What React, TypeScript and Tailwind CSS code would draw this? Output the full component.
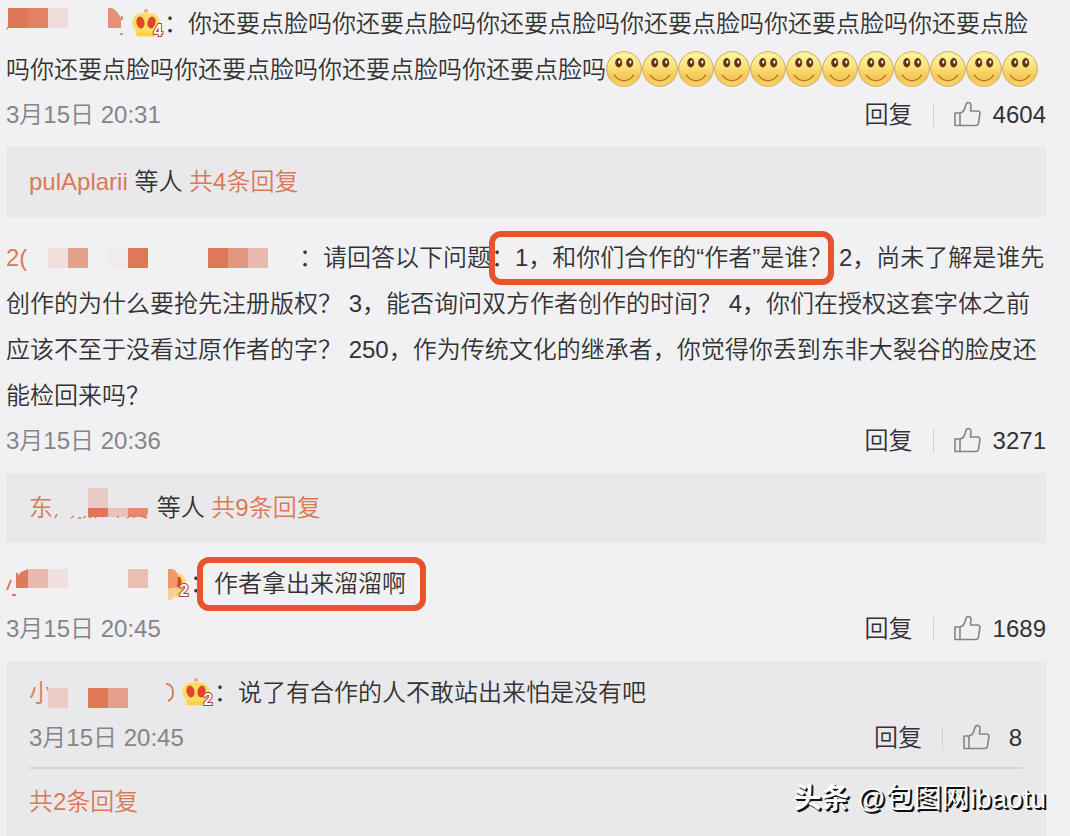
import { useId, type ReactNode } from 'react';

interface Tile {
  x: number;
  y: number;
  fill: string;
  h?: number;
}

const SMILES = Array.from({ length: 12 }, (_, i) => i);

// Pixelated blocks that hide part of a user name
function Mosaic({ className, tiles, children }: { className: string; tiles: Tile[]; children?: ReactNode }) {
  return (
    <svg className={`inline-block h-[46px] align-top ${className}`} aria-hidden="true">
      {tiles.map((t) => (
        <rect key={`${t.x}-${t.y}`} x={t.x} y={t.y} width="20" height={t.h ?? 20} fill={t.fill} />
      ))}
      {children}
    </svg>
  );
}

function Crown({ level, covered }: { level: number; covered?: boolean }) {
  const clip = useId();
  return (
    <svg className="inline-block h-[46px] w-8 align-top" viewBox="0 0 32 46" role="img" aria-label={`VIP ${level}`}>
      <clipPath id={clip}>
        <rect x={covered ? 10 : 0} y="0" width="32" height="46" />
      </clipPath>
      <g clipPath={`url(#${clip})`}>
        <circle cx="14" cy="10" r="2" fill="#e9a878" />
        <path
          d="M4 35.500V29.500C1 27 0 24 0.500 20.500C1 15.500 5 12.500 9.500 12.500C11.500 12.500 13 12 14 11C15 12 16.500 12.500 18.500 12.500C23 12.500 27 15.500 27.500 20.500C28 24 27 27 24 29.500V35.500Z"
          fill="#fbdc62"
          stroke="#f9e3a0"
        />
        <path d="M5 30.500C10 32 18 32 23 30.500V35H5Z" fill="#f8d04c" />
        <ellipse cx="8.500" cy="21.500" rx="4" ry="6" fill="#e0442c" transform="rotate(-12 8.500 21.500)" />
        <ellipse cx="19.500" cy="21.500" rx="4" ry="6" fill="#e0442c" transform="rotate(12 19.500 21.500)" />
      </g>
      {covered && (
        <>
          <path d="M10 8H14C18 9 20 12 20 16L19 26L10 28Z" fill="#f09a68" />
          <path d="M10 28L21 26C20 34 16 38 10 40Z" fill="#f4cf98" />
        </>
      )}
      <text
        x="26"
        y="35"
        textAnchor="middle"
        fontSize="16"
        fontWeight="700"
        fill="#fff"
        stroke="#a8432f"
        strokeWidth="2"
        paintOrder="stroke"
        fontFamily="Liberation Sans, sans-serif"
      >
        {level}
      </text>
    </svg>
  );
}

function Smile() {
  const fill = useId();
  return (
    <svg className="inline-block h-[46px] w-9 align-top" viewBox="0 -4 36 46" role="img" aria-label="微笑">
      <defs>
        <linearGradient id={fill} x1="0" y1="0" x2="0" y2="1">
          <stop offset="0" stopColor="#fff6a4" />
          <stop offset="0.45" stopColor="#fbe07a" />
          <stop offset="0.75" stopColor="#f4c653" />
          <stop offset="1" stopColor="#f9d86a" />
        </linearGradient>
      </defs>
      <circle cx="18" cy="18" r="17.300" fill={`url(#${fill})`} stroke="#cfa95a" />
      <ellipse cx="12.700" cy="11.800" rx="3.500" ry="4.700" fill="#5f3310" />
      <ellipse cx="23.700" cy="11.800" rx="3.500" ry="4.700" fill="#5f3310" />
      <ellipse cx="13.300" cy="11" rx="1.100" ry="1.700" fill="#fff" />
      <ellipse cx="24.300" cy="11" rx="1.100" ry="1.700" fill="#fff" />
      <path d="M8.500 24C13 31.500 23 31.500 27.500 24" fill="none" stroke="#b5702a" strokeWidth="1.300" strokeLinecap="round" />
    </svg>
  );
}

function ThumbIcon() {
  return (
    <svg className="h-7 w-7 shrink-0" viewBox="0 0 28 28" fill="none" stroke="#858587" strokeWidth="1.600" strokeLinejoin="round" aria-hidden="true">
      <path d="M1 12H6V24.500H1Z" />
      <path d="M6 12C9 11.500 10.800 8.500 11.500 5C12 2.500 12.700 1.500 14.200 1.500C16.200 1.500 17.200 3 17 5C16.800 7.500 16.300 8.500 16.500 10H23.500C25.300 10 26.200 11.200 25.900 12.800L24.500 22.200C24.200 23.700 23.400 24.500 21.800 24.500H6" />
    </svg>
  );
}

// Hand-drawn style frame around a quoted part of the comment
function Marked({ frame, children }: { frame: string; children: ReactNode }) {
  return (
    <span className="relative inline-block whitespace-nowrap">
      {children}
      <span className={`pointer-events-none absolute -inset-y-1 rounded-xl border-6 border-[#e7532f] ${frame}`} />
    </span>
  );
}

function Meta({ time, likes }: { time: string; likes: number }) {
  return (
    <div className="flex h-11 items-center justify-between">
      <time className="text-[#858587]">{time}</time>
      <div className="flex items-center">
        <button type="button" className="cursor-pointer">回复</button>
        <span className="mx-5 h-6 w-px bg-[#d2d2d4]" />
        <button type="button" className="flex cursor-pointer items-center gap-[11px]" aria-label={`赞 ${likes}`}>
          <ThumbIcon />
          <span className="min-w-5 text-right">{likes}</span>
        </button>
      </div>
    </div>
  );
}

function ReplyBox({ name, count }: { name: ReactNode; count: number }) {
  return (
    <div className="mt-2.5 mb-[18px] bg-[#e9e9eb] px-[23px] py-3">
      {name} 等人 <a href="#replies" className="text-[#dd7857]">共{count}条回复</a>
    </div>
  );
}

export default function App() {
  return (
    <main className="min-h-screen bg-[#f1f1f3] pt-px pr-6 pl-1.5 font-['Liberation_Sans','Noto_Sans_CJK_SC',sans-serif] text-2xl/[46px] font-[350] text-[#333]">
      <article>
        <p>
          <Mosaic
            className="w-[126px]"
            tiles={[
              { x: 2, y: 7, fill: '#df7757' },
              { x: 22, y: 7, fill: '#e08263' },
              { x: 42, y: 7, fill: '#eedcdb' },
            ]}
          >
            <path d="M0 29L2 25V28Z" fill="#dd7857" />
            <path d="M102 7H106C110 9 113 13 115 17V27H102Z" fill="#e5917a" />
            <path d="M115 15H117V19H115ZM114 32H117V34H114Z" fill="#e5917a" />
          </Mosaic>
          <Crown level={4} />
          ：你还要点脸吗你还要点脸吗你还要点脸吗你还要点脸吗你还要点脸吗你还要点脸吗你还要点脸吗你还要点脸吗你还要点脸吗你还要点脸吗
          {SMILES.map((i) => (
            <Smile key={i} />
          ))}
        </p>
        <Meta time="3月15日 20:31" likes={4604} />
        <ReplyBox name={<a href="#user" className="text-[#dd7857]">pulAplarii</a>} count={4} />
      </article>

      <article>
        <p>
          <a href="#user" className="inline-block w-[22px] align-top whitespace-nowrap text-[#dd7857]">2(</a>
          <Mosaic
            className="w-[271px]"
            tiles={[
              { x: 20, y: 13, fill: '#eedfdd' },
              { x: 40, y: 13, fill: '#e6a18e' },
              { x: 80, y: 13, fill: '#f0ecec' },
              { x: 100, y: 13, fill: '#de7859' },
              { x: 180, y: 13, fill: '#de7859' },
              { x: 200, y: 13, fill: '#e29880' },
              { x: 220, y: 13, fill: '#e8bbae' },
            ]}
          />
          ：请回答以下问题：<Marked frame="-left-[26px] -right-0.5">1，和你们合作的“作者”是谁？</Marked>
          {' 2，尚未了解是谁先创作的为什么要抢先注册版权？ 3，能否询问双方作者创作的时间？ 4，你们在授权这套字体之前应该不至于没看过原作者的字？ 250，作为传统文化的继承者，你觉得你丢到东非大裂谷的脸皮还能检回来吗？'}
        </p>
        <Meta time="3月15日 20:36" likes={3271} />
        <ReplyBox
          name={
            <>
              <a href="#user" className="text-[#dd7857]">东</a>
              <Mosaic
                className="w-[97px]"
                tiles={[
                  { x: 35, y: 3, fill: '#e9cac4' },
                  { x: 35, y: 23, h: 9, fill: '#de7859' },
                  { x: 55, y: 23, h: 9, fill: '#e8c3ba' },
                ]}
              >
                <path d="M75 23H95V28L93 32H75Z" fill="#e38a70" />
                <path d="M2 33L4 29M18 33L21 31M25 33H28M30 33L33 31M36 33L39 31M42 33L44 31M65 33V31M74 33L77 31M81 31V33M88 31L94 33" stroke="#dd7857" strokeWidth="1.500" />
              </Mosaic>
            </>
          }
          count={9}
        />
      </article>

      <article>
        <p>
          <Mosaic
            className="w-[152px]"
            tiles={[
              { x: 22, y: 8, h: 19, fill: '#e8b9ad' },
              { x: 42, y: 8, h: 19, fill: '#f0e0e0' },
              { x: 122, y: 8, h: 19, fill: '#e9beb3' },
            ]}
          >
            <path d="M10 27V17L15 11L22 8V27Z" fill="#e07a5c" />
            <path d="M1 29L5 19M11 12V19M6 34H10" stroke="#dd7857" strokeWidth="2" fill="none" />
          </Mosaic>
          <Crown level={2} covered />
          ：<Marked frame="-left-[17px] -right-5">作者拿出来溜溜啊</Marked>
        </p>
        <Meta time="3月15日 20:45" likes={1689} />

        {/* Nested reply */}
        <div className="relative mt-2.5 bg-[#e9e9eb] pt-[9px] pr-6 pb-[11px] pl-[23px]">
          <p>
            <a href="#user" className="text-[#dd7857]">小</a>
            <Mosaic
              className="relative -ml-[5px] w-[134px]"
              tiles={[
                { x: 0, y: 18, fill: '#e8ccc5' },
                { x: 40, y: 18, fill: '#e07757' },
                { x: 60, y: 18, fill: '#e39f8b' },
              ]}
            >
              <path d="M118 14C122 14 125 17 125 22C125 27 124 29 120 31" stroke="#dd7857" strokeWidth="2" fill="none" />
            </Mosaic>
            <Crown level={2} />
            ：说了有合作的人不敢站出来怕是没有吧
          </p>
          <Meta time="3月15日 20:45" likes={8} />
          <div className="mt-[7px] border-t-2 border-[#d6d6d8] pt-2.5">
            <a href="#replies" className="text-[#dd7857]">共2条回复</a>
          </div>
          {/* Watermark */}
          <div className="absolute right-0 bottom-3.5 text-[28px]/[46px] font-normal whitespace-nowrap text-white [text-shadow:1px_1px_0_#111,2px_2px_0_#111]">
            <b>头条</b> @包图网ibaotu
          </div>
        </div>
      </article>
    </main>
  );
}
